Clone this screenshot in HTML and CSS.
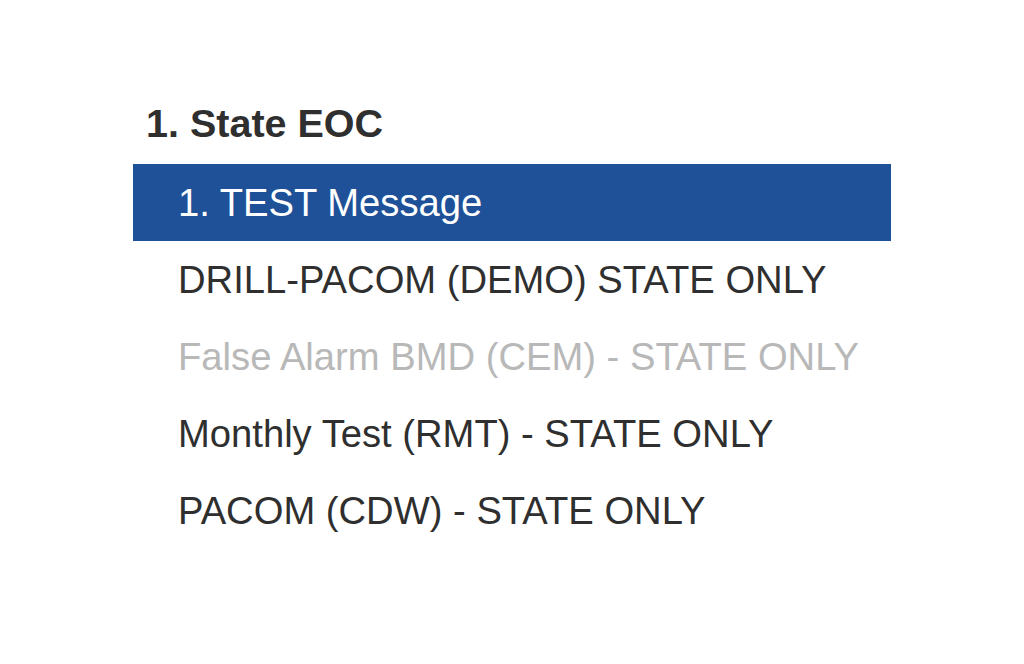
FILE: index.html
```html
<!DOCTYPE html>
<html>
<head>
    <title>Alert Menu</title>
    <link rel="stylesheet" href="styles.css">
</head>
<body>
    <div class="menu-container">
        <h2 class="menu-title">1. State EOC</h2>
        <ul class="menu-list">
            <li class="menu-item selected">1. TEST Message</li>
            <li class="menu-item">DRILL-PACOM (DEMO) STATE ONLY</li>
            <li class="menu-item disabled">False Alarm BMD (CEM) - STATE ONLY</li>
            <li class="menu-item">Monthly Test (RMT) - STATE ONLY</li>
            <li class="menu-item">PACOM (CDW) - STATE ONLY</li>
        </ul>
    </div>
</body>
</html>
```

FILE: styles.css
```css
body {
    font-family: "Liberation Sans", Arial, sans-serif;
    background-color: #ffffff;
    color: #333333;
    margin: 0;
    padding: 0;
}
.menu-container {
    width: 758px;
    margin-left: 133px;
    padding-top: 100px;
}
.menu-title {
    font-size: 39.5px;
    font-weight: bold;
    line-height: 47px;
    margin: 0 0 17px 13px;
    color: #2f2f2f;
}
.menu-list {
    list-style: none;
    margin: 0;
    padding: 0;
}
.menu-item {
    font-size: 38.2px;
    line-height: 77px;
    height: 77px;
    padding-left: 45px;
    color: #2f2f2f;
    white-space: nowrap;
}
.menu-item.selected {
    background-color: #1e5198;
    color: #ffffff;
}
.menu-item.disabled {
    color: #b8b8b8;
}
```
